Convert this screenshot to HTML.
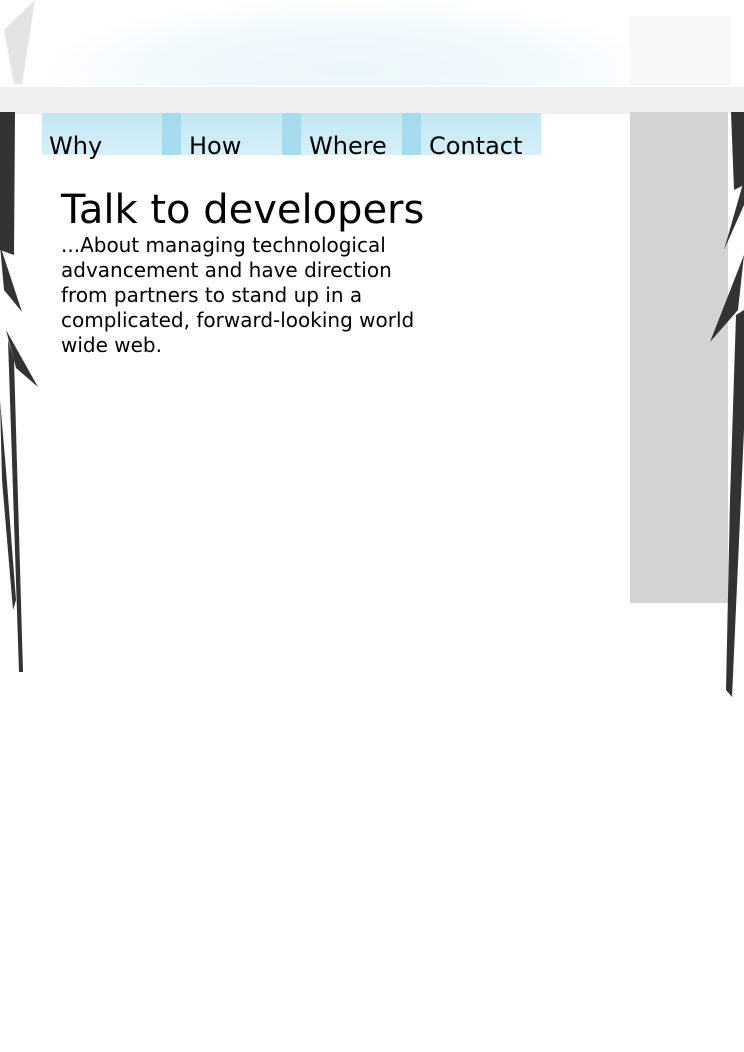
<!DOCTYPE html>
<html><head><meta charset="utf-8"><style>
html,body{margin:0;padding:0;background:#fff;width:744px;height:1052px;overflow:hidden;position:relative;font-family:"DejaVu Sans","Liberation Sans",sans-serif}
.abs{position:absolute}
.glow{left:50px;top:0px;width:600px;height:140px;background:radial-gradient(ellipse at center,#ecf7fb 0%,#f1f9fc 45%,rgba(255,255,255,0) 72%)}
.bar{left:0;top:85px;width:744px;height:27px;background:#f0f0f0;border-top:2px solid #fff}
.side1{left:630px;top:16px;width:100px;height:69px;background:#f7f7f7}
.side2{left:630px;top:112px;width:98px;height:491px;background:#d4d4d4}
.tab{top:113px;height:42px;background:linear-gradient(#c2e7f4,#d6eff8)}
.sep{top:113px;height:42px;width:19px;background:#a6dbee}
.t{top:132px;font-size:24px;color:#000}
h1{position:absolute;left:61px;top:187px;margin:0;font-weight:normal;font-size:40px;color:#000}
p{position:absolute;left:61px;top:233px;margin:0;font-size:20px;line-height:25px;width:365px;color:#000}
</style></head><body>
<div class="abs glow"></div>
<div class="abs side1"></div>
<div class="abs bar"></div>
<div class="abs side2"></div>
<div class="abs tab" style="left:42px;width:120px"></div>
<div class="abs sep" style="left:162px"></div>
<div class="abs tab" style="left:181px;width:101px"></div>
<div class="abs sep" style="left:282px"></div>
<div class="abs tab" style="left:301px;width:101px"></div>
<div class="abs sep" style="left:402px"></div>
<div class="abs tab" style="left:421px;width:120px"></div>
<div class="abs t" style="left:49px">Why</div>
<div class="abs t" style="left:189px">How</div>
<div class="abs t" style="left:309px">Where</div>
<div class="abs t" style="left:429px">Contact</div>
<h1>Talk to developers</h1>
<p>...About managing technological advancement and have direction from partners to stand up in a complicated, forward-looking world wide web.</p>
<svg class="abs" style="left:0;top:0" width="744" height="1052">
<g fill="#333">
<polygon points="0,112 15,112 14,255 0,250"/>
<polygon points="0,245 22,312 4,290"/>
<polygon points="6,330 38,387 16,368"/>
<polygon points="8,340 14,360 23,672 19,672 10,400"/>
<polygon points="0,400 6,470 16,600 13,610 2,480"/>
<polygon points="731,112 744,112 744,185 734,190"/>
<polygon points="744,180 724,250 744,205"/>
<polygon points="744,255 710,342 738,310"/>
<polygon points="736,315 744,310 744,430 732,697 726,690 730,500"/>
</g>
<g fill="#e4e4e4"><polygon points="4,30 35,0 22,84 14,84"/></g>
</svg>
</body></html>
